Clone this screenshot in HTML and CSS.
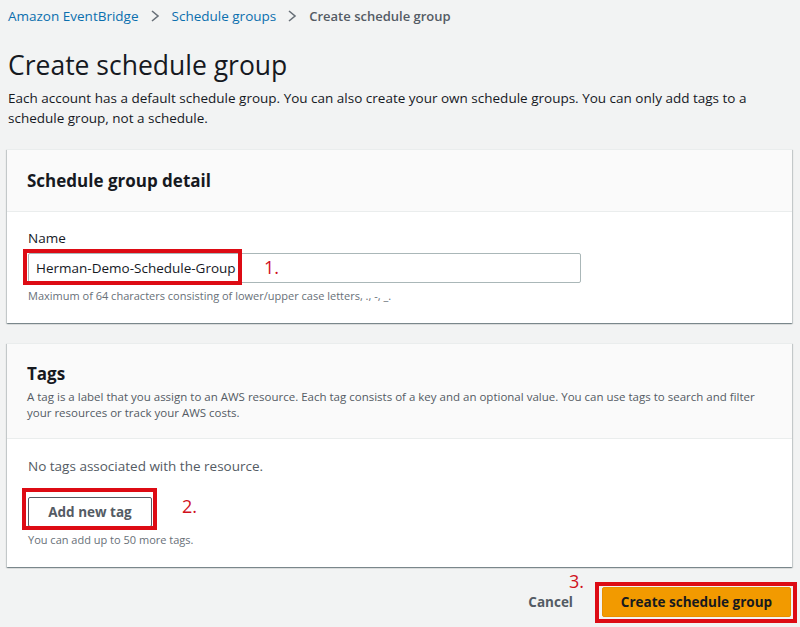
FILE: index.html
```html
<!DOCTYPE html>
<html lang="en">
<head>
<meta charset="utf-8">
<title>Create schedule group</title>
<link rel="stylesheet" href="styles.css">
</head>
<body>
<div class="page">
  <nav class="crumbs">
    <a class="crumb-link">Amazon EventBridge</a>
    <span class="sep"><svg width="10" height="12" viewBox="0 0 10 12"><path d="M2 1 L8 6 L2 11" fill="none" stroke="#687078" stroke-width="1.6"/></svg></span>
    <a class="crumb-link">Schedule groups</a>
    <span class="sep"><svg width="10" height="12" viewBox="0 0 10 12"><path d="M2 1 L8 6 L2 11" fill="none" stroke="#687078" stroke-width="1.6"/></svg></span>
    <span class="crumb-current">Create schedule group</span>
  </nav>

  <h1 class="title">Create schedule group</h1>
  <p class="lead">Each account has a default schedule group. You can also create your own schedule groups. You can only add tags to a schedule group, not a schedule.</p>

  <section class="card card-detail">
    <div class="card-head">
      <h2 class="card-title">Schedule group detail</h2>
    </div>
    <div class="card-body">
      <label class="field-label">Name</label>
      <div class="input-wrap">
        <div class="input">Herman-Demo-Schedule-Group</div>
        <span class="mark mark-input"></span>
        <span class="num num-1">1.</span>
      </div>
      <div class="hint">Maximum of 64 characters consisting of lower/upper case letters, ., -, _.</div>
    </div>
  </section>

  <section class="card card-tags">
    <div class="card-head tags-head">
      <h2 class="card-title">Tags</h2>
      <p class="card-desc">A tag is a label that you assign to an AWS resource. Each tag consists of a key and an optional value. You can use tags to search and filter your resources or track your AWS costs.</p>
    </div>
    <div class="card-body tags-body">
      <div class="empty">No tags associated with the resource.</div>
      <div class="btn-row">
        <button class="btn-normal">Add new tag</button>
        <span class="mark mark-add"></span>
        <span class="num num-2">2.</span>
      </div>
      <div class="hint">You can add up to 50 more tags.</div>
    </div>
  </section>

  <div class="actions">
    <button class="btn-link">Cancel</button>
    <div class="primary-wrap">
      <button class="btn-primary">Create schedule group</button>
      <span class="mark mark-primary"></span>
      <span class="num num-3">3.</span>
    </div>
  </div>
</div>
</body>
</html>
```

FILE: styles.css
```css
* { box-sizing: border-box; }
html, body { margin: 0; padding: 0; }
body {
  background: #f2f3f3;
  font-family: "Open Sans", "Noto Sans", sans-serif;
  color: #16191f;
  width: 800px;
  height: 627px;
  overflow: hidden;
}
.page {
  padding: 6px 8px 0 8px;
}
.crumbs {
  display: flex;
  align-items: center;
  font-size: 13.5px;
  line-height: 20px;
  height: 20px;
}
.crumb-link { color: #0b6fae; }
.crumb-current { color: #545b64; font-weight: 600; font-size: 13px; }
.sep {
  display: inline-flex;
  align-items: center;
  margin: 0 12px 0 11px;
}
.title {
  margin: 22px 0 0 0;
  font-size: 26.5px;
  line-height: 35px;
  font-weight: 400;
  color: #16191f;
}
.lead {
  margin: 5px 0 0 0;
  font-size: 13.5px;
  line-height: 20px;
  color: #16191f;
  padding-right: 30px;
}
.card {
  background: #fff;
  margin-left: -1px;
  box-shadow: 0 1px 1px 0 rgba(0,28,36,.3), 1px 1px 1px 0 rgba(0,28,36,.15), -1px 1px 1px 0 rgba(0,28,36,.15);
  border-top: 1px solid #eaeded;
}
.card-detail { margin-top: 21px; }
.card-tags { margin-top: 20px; }
.card-head {
  background: #fafafa;
  border-bottom: 1px solid #eaeded;
  padding: 0 20px;
  height: 62px;
  display: flex;
  align-items: center;
}
.card-title {
  margin: 0;
  font-size: 17px;
  line-height: 22px;
  font-weight: 700;
  color: #16191f;
}
.tags-head {
  display: block;
  height: 95px;
  padding-top: 19px;
}
.card-desc {
  margin: 4px 0 0 0;
  font-size: 11.5px;
  line-height: 16px;
  color: #545b64;
}
.card-body {
  padding: 16px 20px 19px 21px;
}
.field-label {
  display: block;
  font-size: 13.5px;
  line-height: 20px;
  color: #16191f;
}
.input-wrap {
  position: relative;
  margin-top: 5px;
  width: 553px;
}
.input {
  height: 30px;
  border: 1px solid #aab7b8;
  border-radius: 2px;
  padding: 0 7px;
  font-size: 13.5px;
  line-height: 28px;
  color: #16191f;
  background: #fff;
}
.hint {
  margin-top: 5px;
  font-size: 11px;
  line-height: 16px;
  color: #687078;
}
.mark {
  position: absolute;
  border: 4px solid #dd0b14;
}
.mark-input {
  left: -5px;
  top: -4px;
  width: 219px;
  height: 36px;
}
.num {
  position: absolute;
  color: #d0101c;
  font-size: 18px;
  line-height: 22px;
}
.num-1 { left: 236px; top: 3px; }
.empty {
  font-size: 13.5px;
  line-height: 20px;
  color: #545b64;
}
.tags-body { padding-top: 17px; }
.btn-row {
  position: relative;
  margin-top: 21px;
  height: 30px;
}
.btn-normal {
  height: 30px;
  width: 124px;
  background: #fff;
  border: 1px solid #545b64;
  border-radius: 2px;
  font-family: inherit;
  font-size: 13.5px;
  font-weight: 700;
  color: #545b64;
  padding: 0;
}
.mark-add {
  left: -6px;
  top: -9px;
  width: 135px;
  height: 42px;
}
.num-2 { left: 154px; top: -2px; }
.tags-body .hint { margin-top: 5px; }
.actions {
  display: flex;
  justify-content: flex-end;
  align-items: center;
  margin-top: 20px;
  padding-right: 1px;
}
.btn-link {
  background: none;
  border: none;
  font-family: inherit;
  font-size: 13.5px;
  font-weight: 700;
  color: #545b64;
  padding: 0;
  margin-right: 29px;
  height: 30px;
}
.primary-wrap { position: relative; }
.btn-primary {
  display: block;
  height: 30px;
  width: 189px;
  background: #f29a00;
  border: 1px solid #e88f00;
  border-radius: 2px;
  font-family: inherit;
  font-size: 13.5px;
  font-weight: 700;
  color: #16191f;
  padding: 0;
}
.mark-primary {
  left: -7px;
  top: -5px;
  width: 202px;
  height: 41px;
}
.num-3 { left: -33px; top: -17px; }
```
